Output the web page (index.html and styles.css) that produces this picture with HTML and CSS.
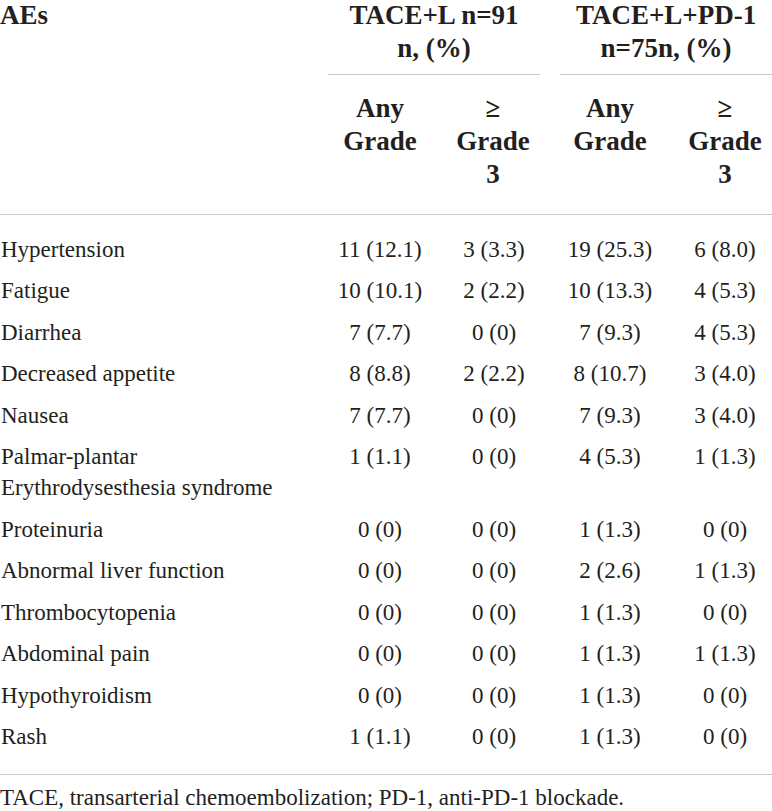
FILE: index.html
```html
<!DOCTYPE html>
<html lang="en">
<head>
<meta charset="utf-8">
<title>Adverse events</title>
<link rel="stylesheet" href="styles.css">
</head>
<body>
<div class="page">
<table class="ae-table">
  <colgroup>
    <col class="c1"><col class="c2"><col class="c3"><col class="c4"><col class="c5">
  </colgroup>
  <thead>
    <tr class="group-row">
      <th class="ae-head" rowspan="2">AEs</th>
      <th colspan="2" class="group"><div class="group-inner g1">TACE+L n=91<br>n, (%)</div></th>
      <th colspan="2" class="group"><div class="group-inner g2">TACE+L+PD-1<br>n=75n, (%)</div></th>
    </tr>
    <tr class="sub-row">
      <th class="s2">Any<br>Grade</th>
      <th class="s3">≥<br>Grade<br>3</th>
      <th class="s4">Any<br>Grade</th>
      <th class="s5">≥<br>Grade<br>3</th>
    </tr>
  </thead>
  <tbody>
    <tr class="first"><td>Hypertension</td><td class="v2">11 (12.1)</td><td>3 (3.3)</td><td>19 (25.3)</td><td class="v5">6 (8.0)</td></tr>
    <tr><td>Fatigue</td><td class="v2">10 (10.1)</td><td>2 (2.2)</td><td>10 (13.3)</td><td class="v5">4 (5.3)</td></tr>
    <tr><td>Diarrhea</td><td class="v2">7 (7.7)</td><td>0 (0)</td><td>7 (9.3)</td><td class="v5">4 (5.3)</td></tr>
    <tr><td>Decreased appetite</td><td class="v2">8 (8.8)</td><td>2 (2.2)</td><td>8 (10.7)</td><td class="v5">3 (4.0)</td></tr>
    <tr><td>Nausea</td><td class="v2">7 (7.7)</td><td>0 (0)</td><td>7 (9.3)</td><td class="v5">3 (4.0)</td></tr>
    <tr><td>Palmar-plantar<br>Erythrodysesthesia syndrome</td><td class="v2">1 (1.1)</td><td>0 (0)</td><td>4 (5.3)</td><td class="v5">1 (1.3)</td></tr>
    <tr><td>Proteinuria</td><td class="v2">0 (0)</td><td>0 (0)</td><td>1 (1.3)</td><td class="v5">0 (0)</td></tr>
    <tr><td>Abnormal liver function</td><td class="v2">0 (0)</td><td>0 (0)</td><td>2 (2.6)</td><td class="v5">1 (1.3)</td></tr>
    <tr><td>Thrombocytopenia</td><td class="v2">0 (0)</td><td>0 (0)</td><td>1 (1.3)</td><td class="v5">0 (0)</td></tr>
    <tr><td>Abdominal pain</td><td class="v2">0 (0)</td><td>0 (0)</td><td>1 (1.3)</td><td class="v5">1 (1.3)</td></tr>
    <tr><td>Hypothyroidism</td><td class="v2">0 (0)</td><td>0 (0)</td><td>1 (1.3)</td><td class="v5">0 (0)</td></tr>
    <tr class="last"><td>Rash</td><td class="v2">1 (1.1)</td><td>0 (0)</td><td>1 (1.3)</td><td class="v5">0 (0)</td></tr>
  </tbody>
</table>
<p class="footnote">TACE, transarterial chemoembolization; PD-1, anti-PD-1 blockade.</p>
</div>
</body>
</html>
```

FILE: styles.css
```css
html, body {
  margin: 0;
  padding: 0;
  background: #ffffff;
}

body {
  font-family: "Liberation Serif", "Times New Roman", serif;
  color: #231f20;
  overflow: hidden;
}

.page {
  width: 772px;
  margin-top: -1px;
}

.ae-table {
  width: 772px;
  table-layout: fixed;
  border-collapse: collapse;
  border-spacing: 0;
}

.c1 { width: 328px; }
.c2 { width: 108px; }
.c3 { width: 116px; }
.c4 { width: 116px; }
.c5 { width: 104px; }

th {
  font-weight: bold;
  font-size: 27px;
  line-height: 33px;
  padding: 0;
  text-align: center;
  vertical-align: top;
}

.ae-head {
  text-align: left;
  border-bottom: 1px solid #c9c9c9;
}

.group-inner {
  padding-bottom: 9px;
  border-bottom: 1px solid #c9c9c9;
}

.g1 { margin-right: 12px; }
.g2 { margin-left: 8px; }

.sub-row th {
  padding-top: 17px;
  padding-bottom: 23px;
  border-bottom: 1px solid #c9c9c9;
}

.sub-row .s2 { padding-right: 4px; }
.sub-row .s3 { padding-right: 2px; }
.sub-row .s5 { padding-left: 10px; }

td {
  font-size: 23px;
  line-height: 31px;
  padding: 5px 0 5.5px 0;
  text-align: center;
  vertical-align: top;
  white-space: nowrap;
}

td:first-child {
  text-align: left;
  padding-left: 1px;
}

td.v2 { padding-right: 4px; }
td.v5 { padding-left: 10px; }

tr.first td { padding-top: 18.5px; }

tr.last td {
  padding-bottom: 22px;
  border-bottom: 1px solid #c9c9c9;
}

.footnote {
  margin: 9px 0 0 0;
  font-size: 23px;
  line-height: 28px;
}
```
